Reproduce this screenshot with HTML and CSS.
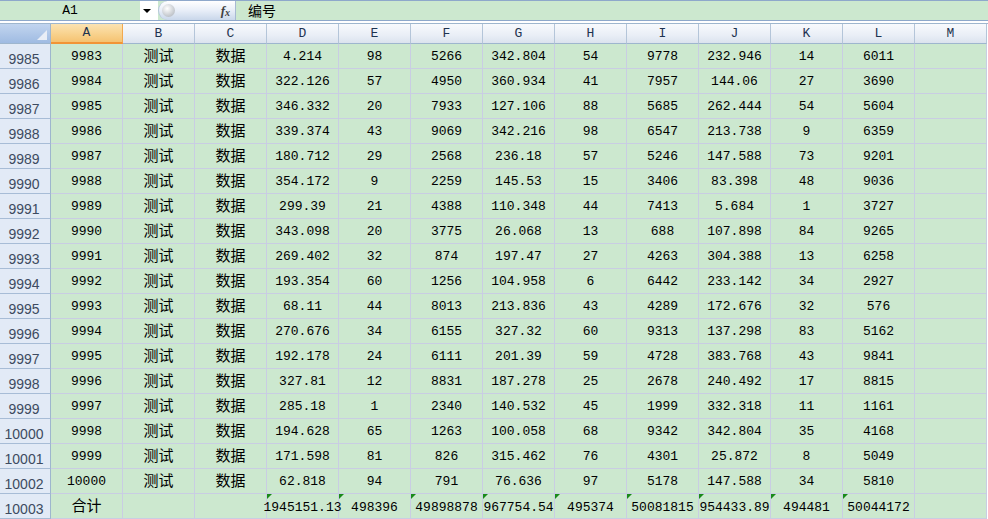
FILE: index.html
```html
<!DOCTYPE html>
<html>
<head>
<meta charset="utf-8">
<link rel="stylesheet" href="styles.css">
</head>
<body>
<div class="fbar">
  <div class="namebox">A1</div>
  <div class="drop"><span class="arrow"></span></div>
  <div class="pill"><span class="knob"></span><span class="fx">f<sub>x</sub></span></div>
  <div class="formula">编号</div>
</div>
<div class="sheet">
  <div class="corner"><span class="tri"></span></div>
  <div class="ch active">A</div><div class="ch">B</div><div class="ch">C</div><div class="ch">D</div><div class="ch">E</div><div class="ch">F</div><div class="ch">G</div><div class="ch">H</div><div class="ch">I</div><div class="ch">J</div><div class="ch">K</div><div class="ch">L</div><div class="ch">M</div>

  <div class="rh">9985</div><div class="c">9983</div><div class="c z">测试</div><div class="c z">数据</div><div class="c">4.214</div><div class="c">98</div><div class="c">5266</div><div class="c">342.804</div><div class="c">54</div><div class="c">9778</div><div class="c">232.946</div><div class="c">14</div><div class="c">6011</div><div class="c"></div>
  <div class="rh">9986</div><div class="c">9984</div><div class="c z">测试</div><div class="c z">数据</div><div class="c">322.126</div><div class="c">57</div><div class="c">4950</div><div class="c">360.934</div><div class="c">41</div><div class="c">7957</div><div class="c">144.06</div><div class="c">27</div><div class="c">3690</div><div class="c"></div>
  <div class="rh">9987</div><div class="c">9985</div><div class="c z">测试</div><div class="c z">数据</div><div class="c">346.332</div><div class="c">20</div><div class="c">7933</div><div class="c">127.106</div><div class="c">88</div><div class="c">5685</div><div class="c">262.444</div><div class="c">54</div><div class="c">5604</div><div class="c"></div>
  <div class="rh">9988</div><div class="c">9986</div><div class="c z">测试</div><div class="c z">数据</div><div class="c">339.374</div><div class="c">43</div><div class="c">9069</div><div class="c">342.216</div><div class="c">98</div><div class="c">6547</div><div class="c">213.738</div><div class="c">9</div><div class="c">6359</div><div class="c"></div>
  <div class="rh">9989</div><div class="c">9987</div><div class="c z">测试</div><div class="c z">数据</div><div class="c">180.712</div><div class="c">29</div><div class="c">2568</div><div class="c">236.18</div><div class="c">57</div><div class="c">5246</div><div class="c">147.588</div><div class="c">73</div><div class="c">9201</div><div class="c"></div>
  <div class="rh">9990</div><div class="c">9988</div><div class="c z">测试</div><div class="c z">数据</div><div class="c">354.172</div><div class="c">9</div><div class="c">2259</div><div class="c">145.53</div><div class="c">15</div><div class="c">3406</div><div class="c">83.398</div><div class="c">48</div><div class="c">9036</div><div class="c"></div>
  <div class="rh">9991</div><div class="c">9989</div><div class="c z">测试</div><div class="c z">数据</div><div class="c">299.39</div><div class="c">21</div><div class="c">4388</div><div class="c">110.348</div><div class="c">44</div><div class="c">7413</div><div class="c">5.684</div><div class="c">1</div><div class="c">3727</div><div class="c"></div>
  <div class="rh">9992</div><div class="c">9990</div><div class="c z">测试</div><div class="c z">数据</div><div class="c">343.098</div><div class="c">20</div><div class="c">3775</div><div class="c">26.068</div><div class="c">13</div><div class="c">688</div><div class="c">107.898</div><div class="c">84</div><div class="c">9265</div><div class="c"></div>
  <div class="rh">9993</div><div class="c">9991</div><div class="c z">测试</div><div class="c z">数据</div><div class="c">269.402</div><div class="c">32</div><div class="c">874</div><div class="c">197.47</div><div class="c">27</div><div class="c">4263</div><div class="c">304.388</div><div class="c">13</div><div class="c">6258</div><div class="c"></div>
  <div class="rh">9994</div><div class="c">9992</div><div class="c z">测试</div><div class="c z">数据</div><div class="c">193.354</div><div class="c">60</div><div class="c">1256</div><div class="c">104.958</div><div class="c">6</div><div class="c">6442</div><div class="c">233.142</div><div class="c">34</div><div class="c">2927</div><div class="c"></div>
  <div class="rh">9995</div><div class="c">9993</div><div class="c z">测试</div><div class="c z">数据</div><div class="c">68.11</div><div class="c">44</div><div class="c">8013</div><div class="c">213.836</div><div class="c">43</div><div class="c">4289</div><div class="c">172.676</div><div class="c">32</div><div class="c">576</div><div class="c"></div>
  <div class="rh">9996</div><div class="c">9994</div><div class="c z">测试</div><div class="c z">数据</div><div class="c">270.676</div><div class="c">34</div><div class="c">6155</div><div class="c">327.32</div><div class="c">60</div><div class="c">9313</div><div class="c">137.298</div><div class="c">83</div><div class="c">5162</div><div class="c"></div>
  <div class="rh">9997</div><div class="c">9995</div><div class="c z">测试</div><div class="c z">数据</div><div class="c">192.178</div><div class="c">24</div><div class="c">6111</div><div class="c">201.39</div><div class="c">59</div><div class="c">4728</div><div class="c">383.768</div><div class="c">43</div><div class="c">9841</div><div class="c"></div>
  <div class="rh">9998</div><div class="c">9996</div><div class="c z">测试</div><div class="c z">数据</div><div class="c">327.81</div><div class="c">12</div><div class="c">8831</div><div class="c">187.278</div><div class="c">25</div><div class="c">2678</div><div class="c">240.492</div><div class="c">17</div><div class="c">8815</div><div class="c"></div>
  <div class="rh">9999</div><div class="c">9997</div><div class="c z">测试</div><div class="c z">数据</div><div class="c">285.18</div><div class="c">1</div><div class="c">2340</div><div class="c">140.532</div><div class="c">45</div><div class="c">1999</div><div class="c">332.318</div><div class="c">11</div><div class="c">1161</div><div class="c"></div>
  <div class="rh">10000</div><div class="c">9998</div><div class="c z">测试</div><div class="c z">数据</div><div class="c">194.628</div><div class="c">65</div><div class="c">1263</div><div class="c">100.058</div><div class="c">68</div><div class="c">9342</div><div class="c">342.804</div><div class="c">35</div><div class="c">4168</div><div class="c"></div>
  <div class="rh">10001</div><div class="c">9999</div><div class="c z">测试</div><div class="c z">数据</div><div class="c">171.598</div><div class="c">81</div><div class="c">826</div><div class="c">315.462</div><div class="c">76</div><div class="c">4301</div><div class="c">25.872</div><div class="c">8</div><div class="c">5049</div><div class="c"></div>
  <div class="rh">10002</div><div class="c">10000</div><div class="c z">测试</div><div class="c z">数据</div><div class="c">62.818</div><div class="c">94</div><div class="c">791</div><div class="c">76.636</div><div class="c">97</div><div class="c">5178</div><div class="c">147.588</div><div class="c">34</div><div class="c">5810</div><div class="c"></div>
  <div class="rh">10003</div><div class="c z">合计</div><div class="c"></div><div class="c"></div><div class="c t"><span>1945151.13</span></div><div class="c t"><span>498396</span></div><div class="c t"><span>49898878</span></div><div class="c t"><span>967754.54</span></div><div class="c t"><span>495374</span></div><div class="c t"><span>50081815</span></div><div class="c t"><span>954433.89</span></div><div class="c t"><span>494481</span></div><div class="c t"><span>50044172</span></div><div class="c"></div>
</div>
</body>
</html>
```
FILE: styles.css
```css
* { box-sizing: border-box; }
html, body { margin: 0; padding: 0; background: #ffffff; }
body { width: 988px; height: 519px; overflow: hidden; font-family: "Liberation Mono", monospace; }

.fbar {
  display: flex;
  height: 21px;
  border-top: 1px solid #8ea8cb;
  border-bottom: 1px solid #8ea8cb;
  background: #cce8cf;
  margin-bottom: 2px;
}
.namebox {
  width: 140px;
  text-align: center;
  font-size: 13px;
  line-height: 19px;
  color: #000;
}
.drop {
  width: 18px;
  background: #ffffff;
  display: flex;
  align-items: center;
  justify-content: center;
}
.arrow {
  width: 0; height: 0;
  border-left: 4px solid transparent;
  border-right: 4px solid transparent;
  border-top: 4px solid #000;
  margin-left: -4px;
}
.pill {
  width: 77px;
  display: flex;
  align-items: center;
  justify-content: space-between;
  padding: 0 5px 0 3px;
  border-radius: 10px 0 0 10px;
  background: linear-gradient(#ffffff, #e8eef8 50%, #c9d7ea);
  border-left: 1px solid #b5c6dc;
}
.knob {
  width: 13px; height: 13px;
  border-radius: 50%;
  background: radial-gradient(circle at 40% 35%, #ffffff, #c9cdd2 60%, #a9aeb5);
}
.fx {
  font-family: "Liberation Serif", serif;
  font-style: italic;
  font-weight: bold;
  font-size: 13px;
  color: #3f3f3f;
}
.fx sub { font-size: 10px; vertical-align: -1px; }
.formula {
  flex: 1;
  border-left: 1px solid #a7b9d2;
  padding-left: 12px;
  font-family: "Noto Sans CJK SC", sans-serif;
  font-size: 14px;
  line-height: 19px;
  color: #000;
}

.sheet {
  display: grid;
  grid-template-columns: 51px repeat(13, 72px);
  grid-template-rows: 20px repeat(19, 25px);
  border-top: 1px solid #9eb6ce;
}
.corner {
  position: relative;
  background: linear-gradient(#c2d5ef, #9fbbe2);
  border-right: 1px solid #9eb6ce;
  border-bottom: 1px solid #9eb6ce;
}
.tri {
  position: absolute;
  right: 3px; bottom: 3px;
  width: 0; height: 0;
  border-left: 10px solid transparent;
  border-bottom: 10px solid #e9eef6;
}
.ch {
  background: linear-gradient(#f8fafd, #e9eef6 60%, #dbe3ee);
  border-right: 1px solid #b4c5d9;
  border-bottom: 1px solid #9eb6ce;
  text-align: center;
  font-size: 13px;
  line-height: 19px;
  color: #1e3350;
}
.ch.active {
  background: linear-gradient(#fbe3b2, #f8d28e 55%, #f5c271);
  border-right: 1px solid #f2a94f;
  border-bottom: 2px solid #f29436;
  line-height: 18px;
}
.rh {
  background: #e2eaf6;
  border-right: 1px solid #9eb6ce;
  border-bottom: 1px solid #a7bcd6;
  font-family: "Liberation Sans", sans-serif;
  font-size: 14px;
  color: #3d4b60;
  display: flex;
  align-items: flex-end;
  justify-content: center;
  padding-bottom: 1px;
  padding-right: 2px;
}
.c {
  position: relative;
  background: #cce8cf;
  border-right: 1px solid #c9cde3;
  border-bottom: 1px solid #c9cde3;
  display: flex;
  align-items: center;
  justify-content: center;
  white-space: nowrap;
  font-size: 13px;
  color: #000;
  padding-top: 1px;
}
.c.z {
  font-family: "Noto Sans CJK SC", sans-serif;
  font-size: 15px;
  line-height: 16px;
  padding-top: 0;
  padding-bottom: 3px;
}
.c.t { padding-top: 2px; }
.c.t span { position: relative; z-index: 1; }
.c.t::before {
  content: "";
  position: absolute;
  left: 0; top: 0;
  width: 0; height: 0;
  border-top: 5px solid #1a8a1a;
  border-right: 5px solid transparent;
  z-index: 2;
}
```
